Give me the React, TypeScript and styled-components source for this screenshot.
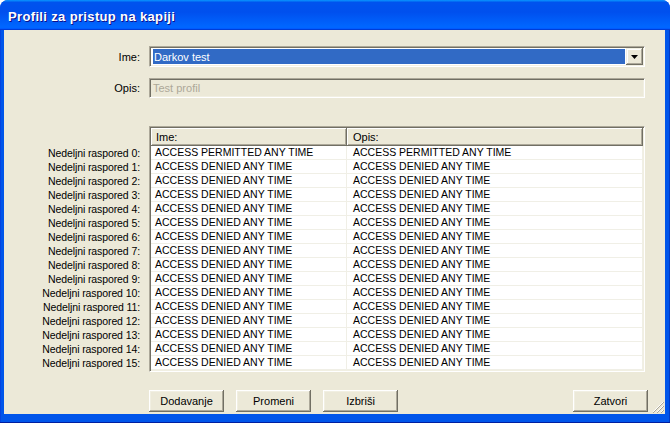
import React from 'react';
import styled, { createGlobalStyle } from 'styled-components';

const Global = createGlobalStyle`
  html, body { margin: 0; padding: 0; background: #ffffff; }
  body { font-family: "Liberation Sans", Arial, sans-serif; font-size: 11px; color: #000; }
  * { box-sizing: border-box; }
`;

const Window = styled.div`
  width: 670px;
  height: 423px;
  display: flex;
  flex-direction: column;
  border-radius: 8px 8px 0 0;
  overflow: hidden;
  background: #0055e5;
`;

const TitleBar = styled.div`
  height: 30px;
  flex: none;
  display: flex;
  align-items: center;
  padding: 3px 0 0 8px;
  background: linear-gradient(180deg, #0997ff 0, #0053ee 8%, #0050ee 40%, #0066ff 88%, #0066ff 93%, #005bff 95%, #003dd7 96%, #003dd7 100%);
  color: #ffffff;
  font-family: "Liberation Sans", Arial, sans-serif;
  font-weight: bold;
  font-size: 13px;
  letter-spacing: 0.35px;
  text-shadow: 1px 1px #0f1089;
`;

const Frame = styled.div`
  flex: 1;
  display: flex;
  padding: 0 5px 8px 4px;
  background: linear-gradient(90deg, #0831d9 0, #0055ea 1px, #0055ea calc(100% - 1px), #001ea0 100%);
  border-bottom: 1px solid #001ea0;
`;

const Client = styled.div`
  flex: 1;
  position: relative;
  background: #ece9d8;
  display: flex;
  flex-direction: column;
  padding-top: 16px;
`;

const FormGrid = styled.div`
  display: grid;
  grid-template-columns: 136px 496px;
  column-gap: 9px;
  row-gap: 11px;
  align-items: center;
`;

const Label = styled.div`
  text-align: right;
  font-size: 11px;
  white-space: nowrap;
`;

const Sunken = styled.div<{ $h: number; $bg: string }>`
  height: ${(p) => p.$h}px;
  background: ${(p) => p.$bg};
  border-style: solid;
  border-width: 1px;
  border-color: #aca899 #ffffff #ffffff #aca899;
  box-shadow: inset 1px 1px #716f64, inset -1px -1px #f1efe2;
  padding: 2px;
  display: flex;
`;

const ComboSel = styled.div`
  flex: 1;
  margin: 0 1px 0 1px;
  background: #316ac5;
  color: #ffffff;
  padding-left: 1px;
  display: flex;
  align-items: center;
  font-size: 11px;
`;

const DropButton = styled.div`
  width: 17px;
  margin: -1px -1px -1px 0;
  background: #ece9d8;
  box-shadow: inset -1px -1px #716f64, inset 1px 1px #f1efe2, inset -2px -2px #aca899, inset 2px 2px #ffffff;
  display: flex;
  align-items: center;
  justify-content: center;
  padding-top: 1px;
`;

const DisabledText = styled.div`
  flex: 1;
  color: #aca899;
  padding-left: 1px;
  display: flex;
  align-items: center;
  font-size: 11px;
`;

const TableArea = styled.div`
  display: grid;
  grid-template-columns: 136px 496px;
  column-gap: 9px;
  margin-top: 28px;
`;

const RowLabels = styled.div`
  display: flex;
  flex-direction: column;
  padding-top: 20px;
`;

const RowLabel = styled.div`
  height: 14px;
  line-height: 14px;
  text-align: right;
  font-size: 10.5px;
  letter-spacing: -0.1px;
  white-space: nowrap;
`;

const ListView = styled.div`
  height: 246px;
  border-style: solid;
  border-width: 1px;
  border-color: #aca899 #ffffff #ffffff #aca899;
  box-shadow: inset 1px 1px #716f64, inset -1px -1px #f1efe2;
  padding: 1px;
  background: #ffffff;
  display: flex;
  flex-direction: column;
`;

const HeaderRow = styled.div`
  display: grid;
  grid-template-columns: 196px 1fr;
  height: 18px;
  flex: none;
`;

const HeaderCell = styled.div<{ $pad: number }>`
  background: #ece9d8;
  box-shadow: inset -1px -1px #716f64, inset 1px 1px #ffffff, inset -2px -2px #aca899;
  padding-left: ${(p) => p.$pad}px;
  display: flex;
  align-items: center;
  font-size: 11px;
`;

const DataRow = styled.div`
  display: grid;
  grid-template-columns: 196px 1fr;
  height: 14px;
  flex: none;
`;

const Cell = styled.div<{ $pad: number }>`
  padding-left: ${(p) => p.$pad}px;
  line-height: 13px;
  font-size: 10.5px;
  white-space: nowrap;
  border-bottom: 1px solid #f0efe6;
  border-right: 1px solid #f0efe6;
`;

const ButtonRow = styled.div`
  display: flex;
  gap: 12px;
  margin-top: 18px;
  padding: 0 17px 0 145px;
`;

const Button = styled.div<{ $push?: boolean }>`
  width: 75px;
  height: 22px;
  margin-left: ${(p) => (p.$push ? 'auto' : '0')};
  background: #ece9d8;
  box-shadow: inset -1px -1px #716f64, inset 1px 1px #ffffff, inset -2px -2px #aca899, inset 2px 2px #f1efe2;
  display: flex;
  align-items: center;
  justify-content: center;
  font-size: 11px;
`;

const Grip = styled.svg`
  position: absolute;
  right: 1px;
  bottom: 1px;
`;

const rows = Array.from({ length: 16 }, (_, i) =>
  i === 0 ? 'ACCESS PERMITTED ANY TIME' : 'ACCESS DENIED ANY TIME'
);

export default function App() {
  return (
    <>
      <Global />
      <Window>
        <TitleBar>Profili za pristup na kapiji</TitleBar>
        <Frame>
          <Client>
            <FormGrid>
              <Label>Ime:</Label>
              <Sunken $h={21} $bg="#ffffff">
                <ComboSel>Darkov test</ComboSel>
                <DropButton>
                  <svg width="7" height="4" viewBox="0 0 7 4">
                    <polygon points="0,0 7,0 3.5,4" fill="#000" />
                  </svg>
                </DropButton>
              </Sunken>
              <Label>Opis:</Label>
              <Sunken $h={20} $bg="#ece9d8">
                <DisabledText>Test profil</DisabledText>
              </Sunken>
            </FormGrid>
            <TableArea>
              <RowLabels>
                {rows.map((_, i) => (
                  <RowLabel key={i}>Nedeljni raspored {i}:</RowLabel>
                ))}
              </RowLabels>
              <ListView>
                <HeaderRow>
                  <HeaderCell $pad={5}>Ime:</HeaderCell>
                  <HeaderCell $pad={6}>Opis:</HeaderCell>
                </HeaderRow>
                {rows.map((r, i) => (
                  <DataRow key={i}>
                    <Cell $pad={4}>{r}</Cell>
                    <Cell $pad={6}>{r}</Cell>
                  </DataRow>
                ))}
              </ListView>
            </TableArea>
            <ButtonRow>
              <Button>Dodavanje</Button>
              <Button>Promeni</Button>
              <Button>Izbriši</Button>
              <Button $push>Zatvori</Button>
            </ButtonRow>
            <Grip width="12" height="12" viewBox="0 0 12 12">
              <g strokeWidth="1">
                <line x1="11" y1="1" x2="1" y2="11" stroke="#ffffff" />
                <line x1="12" y1="1" x2="1" y2="12" stroke="#aca899" />
                <line x1="11" y1="5" x2="5" y2="11" stroke="#ffffff" />
                <line x1="12" y1="5" x2="5" y2="12" stroke="#aca899" />
                <line x1="11" y1="9" x2="9" y2="11" stroke="#ffffff" />
                <line x1="12" y1="9" x2="9" y2="12" stroke="#aca899" />
              </g>
            </Grip>
          </Client>
        </Frame>
      </Window>
    </>
  );
}
